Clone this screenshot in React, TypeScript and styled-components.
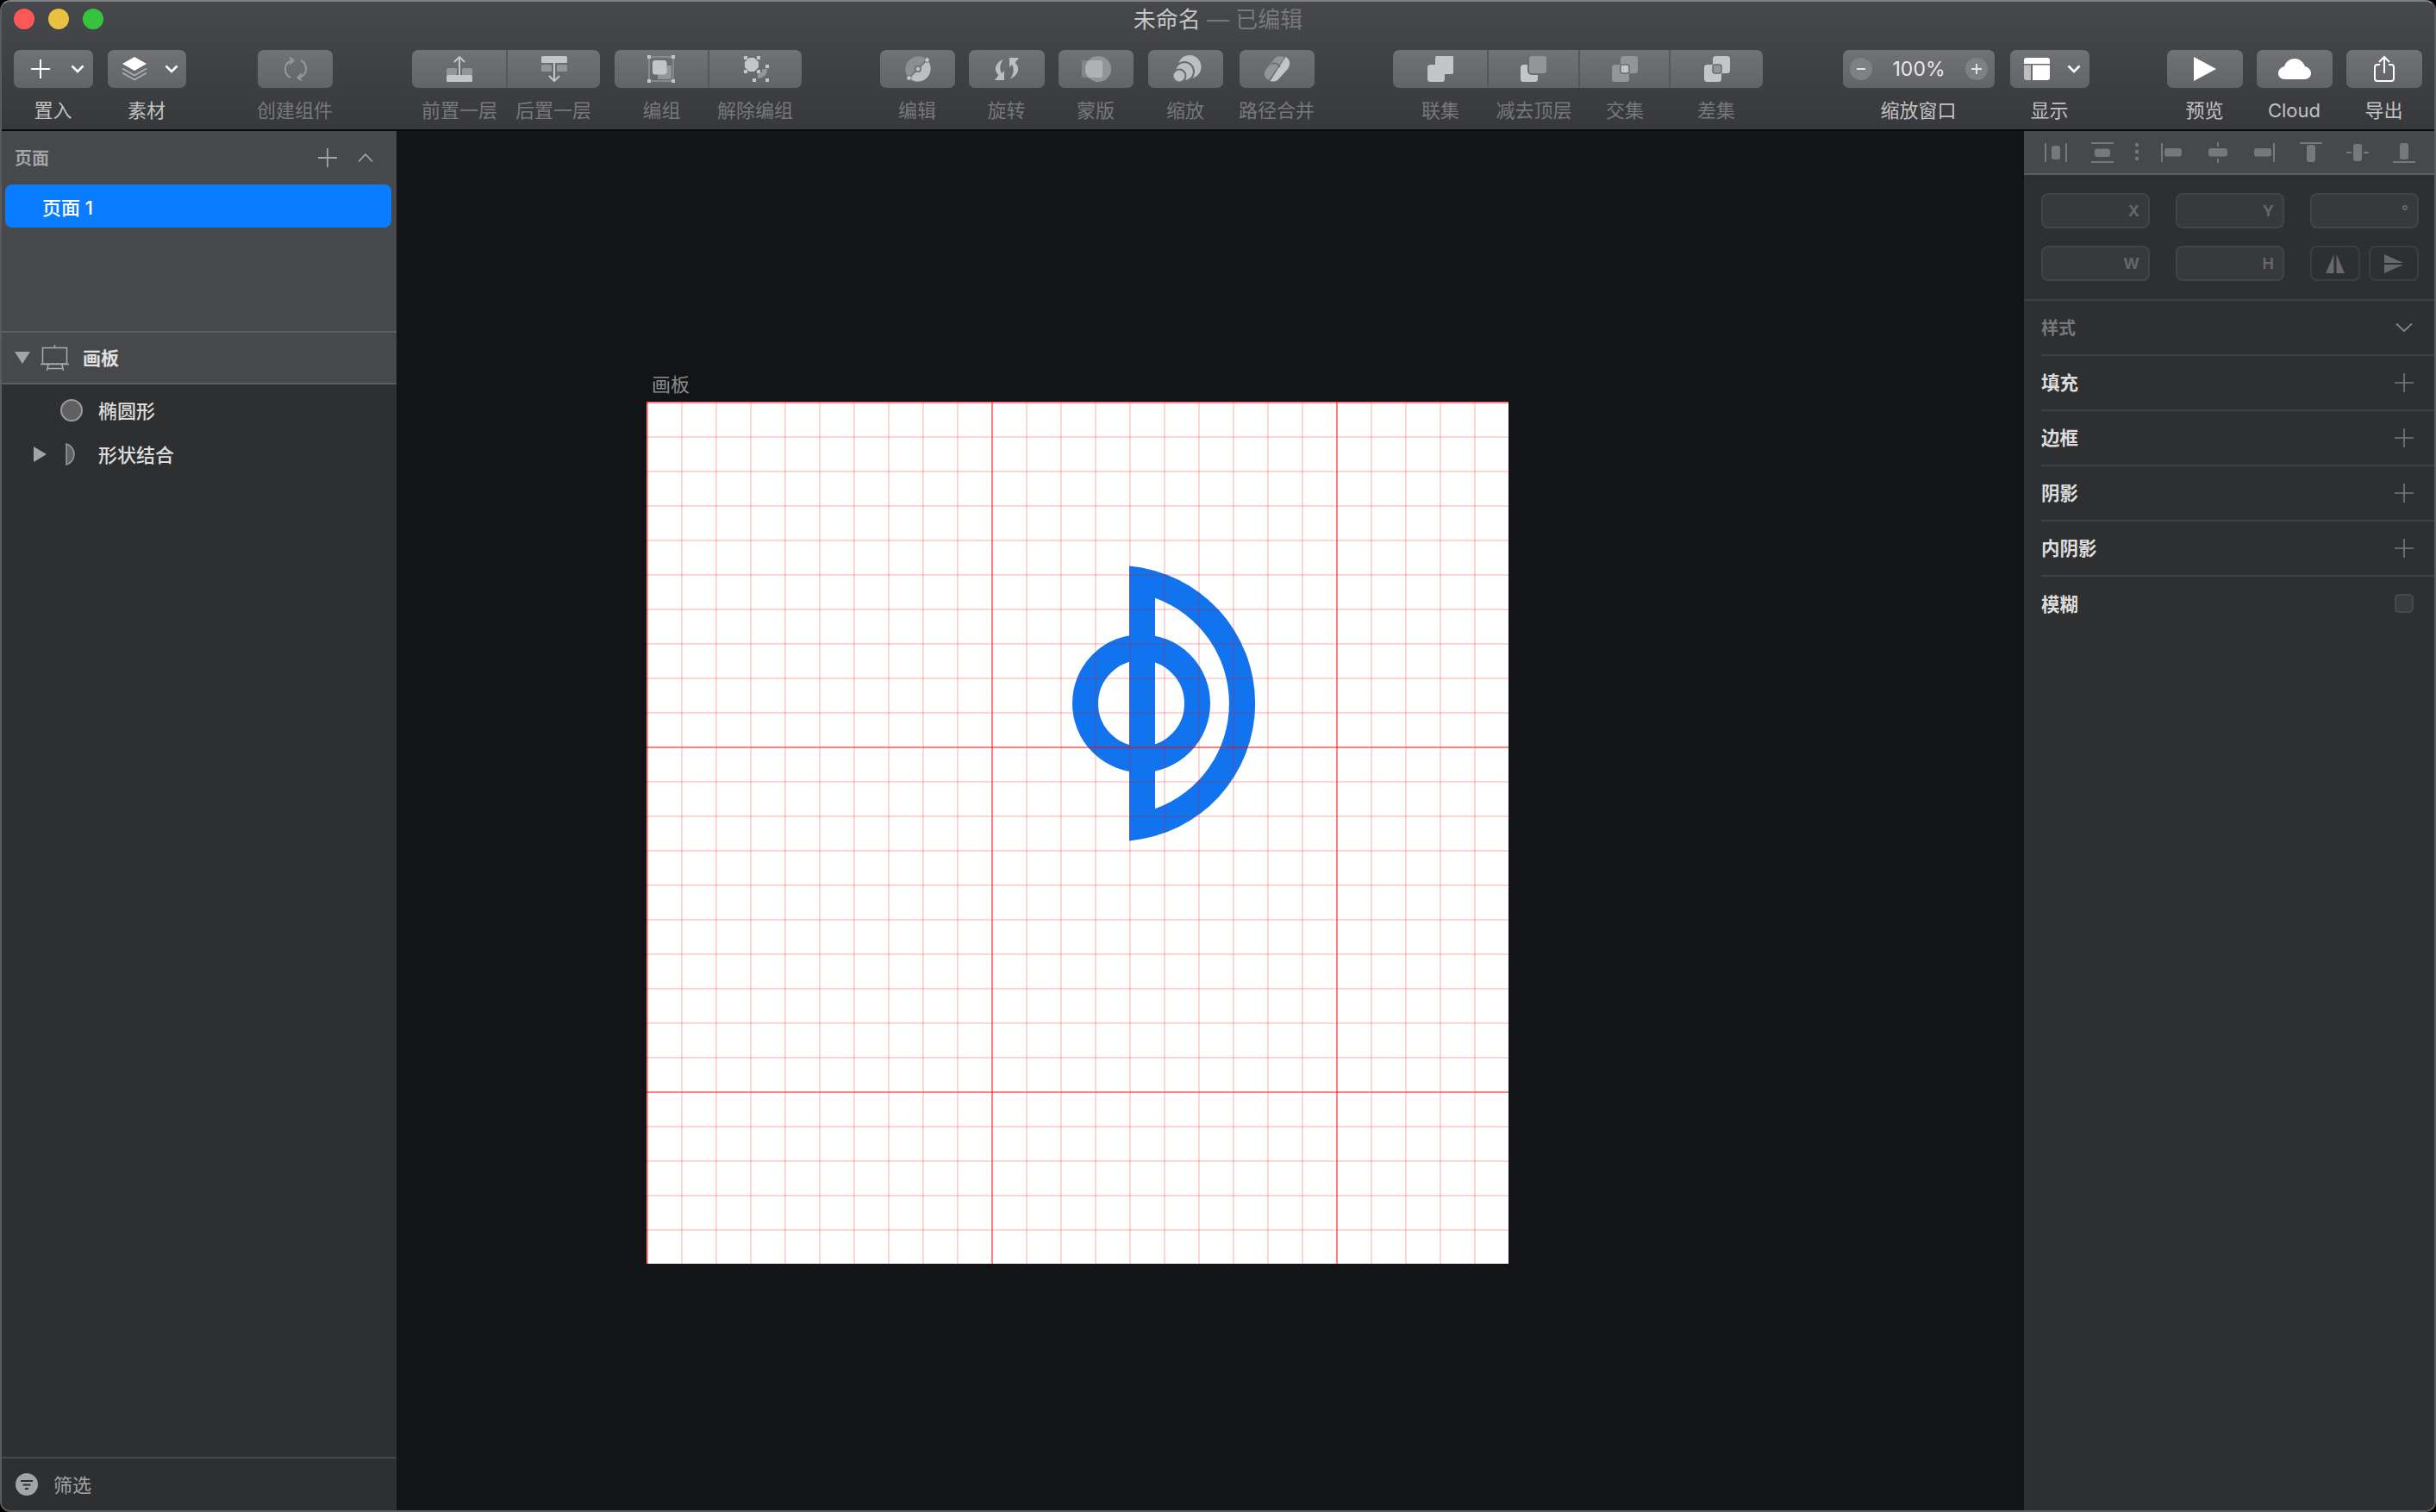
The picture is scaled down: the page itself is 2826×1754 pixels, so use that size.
import React from "react";
import styled, { createGlobalStyle } from "styled-components";

const LIGHT = "#c4c5c7";
const DARK = "#949597";
const FACE = "#6a6b6e";

const GlobalStyle = createGlobalStyle`
  html, body {
    margin: 0;
    padding: 0;
    background: #000;
  }
  * {
    box-sizing: border-box;
  }
  svg {
    display: block;
    flex: none;
  }
`;

const Chevron = () => (
  <svg width="16" height="12" viewBox="0 0 16 12">
    <path d="M1.5 2.5 8 9l6.5-6.5" fill="none" stroke="#fff" strokeWidth="2.6" />
  </svg>
);

const PlusIcon = () => (
  <svg width="30" height="24" viewBox="0 0 30 24">
    <path d="M4 12h22M15 1v22" stroke="#fff" strokeWidth="2" />
  </svg>
);

const LayersIcon = () => (
  <svg width="30" height="28" viewBox="0 0 30 28">
    <path d="M15 0 29 8 15 16 1 8z" fill="#fff" />
    <path d="M1 13.5 15 21.5 29 13.5M1 18.5 15 26.5 29 18.5" fill="none" stroke="#aeafb1" strokeWidth="1.6" />
  </svg>
);

const SyncIcon = () => (
  <svg width="30" height="30" viewBox="0 0 30 30" fill="none" stroke="#97989a" strokeWidth="2">
    <path d="M12 5C6 6 3 10 3 15c0 4 2 8 6 10" />
    <path d="M8 1.5 12.5 5 8 9.5" />
    <path d="M18 25c6-1 9-5 9-10 0-4-2-8-6-10" />
    <path d="M22 28.5 17.5 25 22 20.5" />
  </svg>
);

const ForwardIcon = () => (
  <svg width="30" height="30" viewBox="0 0 30 30">
    <rect x="0" y="14" width="12" height="8" rx="1.5" fill={DARK} />
    <rect x="18" y="14" width="12" height="8" rx="1.5" fill={DARK} />
    <rect x="0" y="22" width="30" height="8" rx="1.5" fill={LIGHT} />
    <path d="M15 1v22M9 7l6-6 6 6" fill="none" stroke={LIGHT} strokeWidth="2" />
  </svg>
);

const BackwardIcon = () => (
  <svg width="30" height="30" viewBox="0 0 30 30">
    <rect x="0" y="10" width="12" height="8" rx="1.5" fill={DARK} />
    <rect x="18" y="10" width="12" height="8" rx="1.5" fill={DARK} />
    <rect x="0" y="0" width="30" height="8" rx="1.5" fill={LIGHT} />
    <path d="M15 7v22M9 23l6 6 6-6" fill="none" stroke={LIGHT} strokeWidth="2" />
  </svg>
);

const GroupIcon = () => (
  <svg width="32" height="32" viewBox="0 0 32 32">
    <rect x="2" y="2" width="28" height="28" fill="none" stroke="#929395" strokeWidth="1.5" />
    <path d="M28 12v14a2 2 0 0 1-2 2H12v-6h10V12z" fill={DARK} />
    <rect x="6" y="6" width="16.5" height="16.5" rx="3" fill={LIGHT} />
    {[0, 28].map((x) =>
      [0, 28].map((y) => <rect key={`${x}-${y}`} x={x} y={y} width="4" height="4" fill={LIGHT} />)
    )}
  </svg>
);

const UngroupIcon = () => (
  <svg width="32" height="32" viewBox="0 0 32 32">
    <path d="M7 3h6l5 5v6l-5 5H7l-5-5V8z" transform="translate(1 0)" fill={LIGHT} />
    <path d="M24 14a7 7 0 0 1-8 8" fill="none" stroke={DARK} strokeWidth="5.5" transform="translate(2 2)" />
    {[
      [2, 1],
      [17, 1],
      [2, 17],
      [17, 17],
      [27, 11],
      [12, 27],
      [27, 27],
    ].map(([x, y]) => (
      <rect key={`${x}-${y}`} x={x} y={y} width="4" height="4" fill={LIGHT} />
    ))}
  </svg>
);

const EditIcon = () => (
  <svg width="36" height="36" viewBox="0 0 36 36">
    <path d="M28.6 7.4A15 15 0 0 0 7.4 28.6z" fill="#8d8e90" />
    <path d="M28.6 7.4A15 15 0 0 1 7.4 28.6z" fill="#bdbec0" />
    <path d="M8 28 28 8" stroke={FACE} strokeWidth="1.5" />
    <circle cx="7.5" cy="28.5" r="2.8" fill="#c9cacc" stroke={FACE} strokeWidth="1" />
    <circle cx="28.5" cy="7.5" r="2.8" fill="#c9cacc" stroke={FACE} strokeWidth="1" />
    <circle cx="18" cy="18" r="3.2" fill="#bdbec0" stroke={FACE} strokeWidth="1.5" />
  </svg>
);

const RotateIcon = () => {
  const arm = "M11 3.7C3 7-2 16 5.5 22L1 28h11V17l-3 3C6 15 7 9 11 3.7z";
  return (
    <svg width="30" height="30" viewBox="0 0 30 30" fill="#bdbec0">
      <path d={arm} />
      <path d={arm} transform="rotate(180 15 15)" />
    </svg>
  );
};

const MaskIcon = () => (
  <svg width="36" height="36" viewBox="0 0 36 36">
    <defs>
      <clipPath id="mask-circle">
        <circle cx="20" cy="18" r="15" />
      </clipPath>
    </defs>
    <rect x="1" y="8" width="24" height="20" rx="2" fill="#858688" />
    <circle cx="20" cy="18" r="15" fill="#939496" />
    <rect x="1" y="8" width="24" height="20" rx="2" fill="#b0b1b3" clipPath="url(#mask-circle)" />
  </svg>
);

const ScaleIcon = () => (
  <svg width="36" height="36" viewBox="0 0 36 36" fill="#bdbec0">
    <circle cx="22" cy="15.5" r="13.5" />
    <circle cx="16" cy="21" r="11" stroke={FACE} strokeWidth="2" />
    <circle cx="10" cy="26" r="7.5" stroke={FACE} strokeWidth="2" />
  </svg>
);

const MergeIcon = () => (
  <svg width="36" height="36" viewBox="0 0 36 36">
    <path d="M26 5C22 2 16 3 13 8L5 18C1 23 3 29 8 31z" fill="#939496" />
    <path d="M27.5 4C32 6 34 12 30 18L19 30C16 33 12 33 9.5 32z" fill="#c4c5c7" />
    <path d="M11 12C16 10 20 13 21 16" fill="none" stroke={FACE} strokeWidth="1.5" />
  </svg>
);

type BoolColors = { top: string; bottom: string; overlap?: string };

const BoolIcon = ({ top, bottom, overlap }: BoolColors) => (
  <svg width="30" height="30" viewBox="0 0 30 30">
    <rect x="0" y="10" width="20" height="20" rx="3.5" fill={bottom} />
    {overlap ? (
      <rect x="10" y="0" width="20" height="20" rx="3.5" fill={top} />
    ) : (
      <rect x="9" y="-1" width="22" height="22" rx="4" fill={top} stroke={FACE} strokeWidth={top === LIGHT ? 0 : 2} />
    )}
    {overlap && <rect x="10" y="10" width="10" height="10" rx="2.5" fill={overlap} stroke={FACE} strokeWidth="1.5" />}
  </svg>
);

const LayoutIcon = () => (
  <svg width="30" height="26" viewBox="0 0 30 26">
    <path d="M3 0h24a3 3 0 0 1 3 3v4H0V3a3 3 0 0 1 3-3z" fill="#fff" />
    <path d="M0 8.5h8V26H3a3 3 0 0 1-3-3z" fill="#bcbdbf" />
    <path d="M10 8.5h20V23a3 3 0 0 1-3 3H10z" fill="#fff" />
  </svg>
);

const PlayIcon = () => (
  <svg width="26" height="28" viewBox="0 0 26 28">
    <path d="M0 0 26 14 0 28z" fill="#fff" />
  </svg>
);

const CloudIcon = () => (
  <svg width="38" height="24" viewBox="0 0 38 24">
    <path
      d="M8 24C3 24 0 21 0 17c0-4 3-7 7-8C9 3 14 0 19 0c6 0 10 4 12 9 4 1 7 4 7 8 0 4-3 7-8 7z"
      fill="#fff"
    />
  </svg>
);

const ShareIcon = () => (
  <svg width="24" height="32" viewBox="0 0 24 32" fill="none" stroke="#fff" strokeWidth="2">
    <path d="M7 11H4a3 3 0 0 0-3 3v13a3 3 0 0 0 3 3h16a3 3 0 0 0 3-3V14a3 3 0 0 0-3-3h-3" />
    <path d="M12 21V2M6 8l6-6 6 6" />
  </svg>
);

const ZoomGlyph = ({ plus }: { plus?: boolean }) => (
  <svg width="26" height="26" viewBox="0 0 26 26">
    <circle cx="13" cy="13" r="13" fill="#7f8083" />
    <path d={plus ? "M7 13h12M13 7v12" : "M8 13h10"} stroke="#e4e4e5" strokeWidth="2" />
  </svg>
);

type Tool = {
  label: string;
  w: number;
  gap: number;
  seg?: "first" | "mid" | "last";
  off?: boolean;
  drop?: boolean;
  icon: React.ReactNode;
};

const tools: Tool[] = [
  { label: "置入", w: 92, gap: 0, drop: true, icon: <PlusIcon /> },
  { label: "素材", w: 91, gap: 17, drop: true, icon: <LayersIcon /> },
  { label: "创建组件", w: 87, gap: 83, off: true, icon: <SyncIcon /> },
  { label: "前置一层", w: 111, gap: 92, off: true, seg: "first", icon: <ForwardIcon /> },
  { label: "后置一层", w: 107, gap: 0, off: true, seg: "last", icon: <BackwardIcon /> },
  { label: "编组", w: 110, gap: 17, off: true, seg: "first", icon: <GroupIcon /> },
  { label: "解除编组", w: 107, gap: 0, off: true, seg: "last", icon: <UngroupIcon /> },
  { label: "编辑", w: 87, gap: 91, off: true, icon: <EditIcon /> },
  { label: "旋转", w: 88, gap: 16, off: true, icon: <RotateIcon /> },
  { label: "蒙版", w: 87, gap: 16, off: true, icon: <MaskIcon /> },
  { label: "缩放", w: 87, gap: 17, off: true, icon: <ScaleIcon /> },
  { label: "路径合并", w: 87, gap: 19, off: true, icon: <MergeIcon /> },
  { label: "联集", w: 111, gap: 91, off: true, seg: "first", icon: <BoolIcon top={LIGHT} bottom={LIGHT} /> },
  { label: "减去顶层", w: 106, gap: 0, off: true, seg: "mid", icon: <BoolIcon top={DARK} bottom={LIGHT} /> },
  { label: "交集", w: 105, gap: 0, off: true, seg: "mid", icon: <BoolIcon top={DARK} bottom={DARK} overlap={LIGHT} /> },
  { label: "差集", w: 107, gap: 0, off: true, seg: "last", icon: <BoolIcon top={LIGHT} bottom={LIGHT} overlap={DARK} /> },
];

const alignIcons: { gap: number; draw: React.ReactNode }[] = [
  { gap: 0, draw: <><path d="M1 1v22M25 1v22" /><rect className="solid" x="8" y="4" width="10" height="16" rx="3" /></> },
  { gap: 28, draw: <><path d="M0 1h26M0 23h26" /><rect className="solid" x="4" y="7.5" width="18" height="9.5" rx="3" /></> },
  { gap: 53, draw: <><path d="M3 1v22" /><rect className="solid" x="6" y="7" width="20" height="9.5" rx="3" /></> },
  { gap: 29, draw: <><path d="M13 0v5M13 19v5" /><rect className="solid" x="2" y="7" width="22" height="9.5" rx="3" /></> },
  { gap: 29, draw: <><path d="M23 1v22" /><rect className="solid" x="0" y="7" width="20" height="9.5" rx="3" /></> },
  { gap: 27, draw: <><path d="M0 1h26" /><rect className="solid" x="8" y="3" width="10" height="20" rx="3" /></> },
  { gap: 28, draw: <><path d="M0 12h6M20 12h6" /><rect className="solid" x="8" y="2" width="10" height="20" rx="3" /></> },
  { gap: 28, draw: <><path d="M0 23h26" /><rect className="solid" x="8" y="1" width="10" height="19" rx="3" /></> },
];

const styleRows = ["填充", "边框", "阴影", "内阴影"];

export default function App() {
  return (
    <>
      <GlobalStyle />
      <Window>
        <Header>
          <TitleBar>
            <Lights>
              <Light $color="#fc5858" />
              <Light $color="#e9c03f" />
              <Light $color="#36c43f" />
            </Lights>
            <Title>
              未命名<TitleState> — 已编辑</TitleState>
            </Title>
          </TitleBar>
          <Toolbar>
            {tools.map((t) => (
              <ToolColumn key={t.label} $w={t.w} $gap={t.gap}>
                <Face $seg={t.seg} $drop={t.drop}>
                  {t.icon}
                  {t.drop && <Chevron />}
                </Face>
                <ToolLabel $off={t.off}>{t.label}</ToolLabel>
              </ToolColumn>
            ))}
            <ToolColumn $w={176} $gap={93}>
              <ZoomFace>
                <ZoomGlyph />
                <ZoomValue>100%</ZoomValue>
                <ZoomGlyph plus />
              </ZoomFace>
              <ToolLabel>缩放窗口</ToolLabel>
            </ToolColumn>
            <ToolColumn $w={92} $gap={18}>
              <Face $drop>
                <LayoutIcon />
                <Chevron />
              </Face>
              <ToolLabel>显示</ToolLabel>
            </ToolColumn>
            <ToolColumn $w={88} $gap={90}>
              <Face>
                <PlayIcon />
              </Face>
              <ToolLabel>预览</ToolLabel>
            </ToolColumn>
            <ToolColumn $w={88} $gap={16}>
              <Face>
                <CloudIcon />
              </Face>
              <ToolLabel>Cloud</ToolLabel>
            </ToolColumn>
            <ToolColumn $w={88} $gap={16}>
              <Face>
                <ShareIcon />
              </Face>
              <ToolLabel>导出</ToolLabel>
            </ToolColumn>
          </Toolbar>
        </Header>

        <Body>
          <LeftPanel>
            <PagesSection>
              <PagesHeader>
                <PagesTitle>页面</PagesTitle>
                <PagesActions>
                  <svg width="22" height="22" viewBox="0 0 22 22">
                    <path d="M0 11h22M11 0v22" stroke="#a3a4a5" strokeWidth="1.8" />
                  </svg>
                  <svg width="18" height="12" viewBox="0 0 18 12">
                    <path d="M1 10.5 9 2l8 8.5" fill="none" stroke="#a3a4a5" strokeWidth="1.8" />
                  </svg>
                </PagesActions>
              </PagesHeader>
              <PageRow>页面 1</PageRow>
            </PagesSection>
            <GroupRow>
              <svg width="18" height="14" viewBox="0 0 18 14">
                <path d="M0 0h18L9 14z" fill="#a3a4a5" />
              </svg>
              <svg width="34" height="30" viewBox="0 0 34 30" fill="none" stroke="#a9aaab" strokeWidth="1.5">
                <path d="M2.5 3.5h28V22h-28zM0 22.5h33M16.5 0v3.5M9 23 7.5 30M25 23l1.5 7M8 27.5h18" />
              </svg>
              <GroupName>画板</GroupName>
            </GroupRow>
            <LayerList>
              <LayerRow>
                <span />
                <svg width="26" height="26" viewBox="0 0 26 26">
                  <circle cx="13" cy="13" r="12" fill="#5f6062" stroke="#9b9b9c" strokeWidth="2" />
                </svg>
                <LayerName>椭圆形</LayerName>
              </LayerRow>
              <LayerRow>
                <svg width="15" height="18" viewBox="0 0 15 18">
                  <path d="M0 0 15 9 0 18z" fill="#a3a4a5" />
                </svg>
                <ShapeGlyph width="14" height="26" viewBox="0 0 14 26">
                  <path d="M1 1a12.5 12.5 0 0 1 0 24z" fill="#5f6062" stroke="#9b9b9c" strokeWidth="1.5" />
                </ShapeGlyph>
                <LayerName>形状结合</LayerName>
              </LayerRow>
            </LayerList>
            <FilterBar>
              <svg width="26" height="26" viewBox="0 0 26 26">
                <circle cx="13" cy="13" r="13" fill="#a3a4a5" />
                <path d="M6 9h14M8.5 13.5h9M11 18h4" stroke="#2e2f31" strokeWidth="2" />
              </svg>
              <FilterText>筛选</FilterText>
            </FilterBar>
          </LeftPanel>

          <Canvas>
            <ArtboardLabel>画板</ArtboardLabel>
            <Artboard>
              <svg width="1000" height="1000" viewBox="0 0 1000 1000">
                <path
                  fillRule="evenodd"
                  d="M560 190.6A160 160 0 0 1 560 509.4ZM590 227.7A130 130 0 0 1 590 472.3Z"
                  fill="#1273ee"
                />
                <circle cx="574" cy="350" r="65" fill="none" stroke="#1273ee" strokeWidth="30" />
              </svg>
            </Artboard>
          </Canvas>

          <RightPanel>
            <AlignBar>
              {alignIcons.map((a, i) => (
                <AlignGlyph key={i} $gap={a.gap} width="26" height="24" viewBox="0 0 26 24">
                  {a.draw}
                </AlignGlyph>
              ))}
              <AlignDots width="6" height="22" viewBox="0 0 6 22">
                <circle cx="3" cy="3" r="2.2" />
                <circle cx="3" cy="11" r="2.2" />
                <circle cx="3" cy="19" r="2.2" />
              </AlignDots>
            </AlignBar>
            <Geometry>
              <FieldRow>
                <Field>X</Field>
                <Field>Y</Field>
                <Field>°</Field>
              </FieldRow>
              <FieldRow>
                <Field>W</Field>
                <Field>H</Field>
                <FlipGroup>
                  <FlipButton>
                    <svg width="24" height="22" viewBox="0 0 24 22" fill="#66676a">
                      <path d="M10.5 0v22H1zM13.5 0v22H23z" />
                    </svg>
                  </FlipButton>
                  <FlipButton>
                    <svg width="24" height="22" viewBox="0 0 24 22" fill="#66676a">
                      <path d="M1 0l22 10H1zM1 12h22L1 22z" />
                    </svg>
                  </FlipButton>
                </FlipGroup>
              </FieldRow>
            </Geometry>
            <StyleRow>
              <StyleTitle>样式</StyleTitle>
              <svg width="22" height="12" viewBox="0 0 22 12">
                <path d="M2 1.5 11 10l9-8.5" fill="none" stroke="#848587" strokeWidth="1.8" />
              </svg>
            </StyleRow>
            {styleRows.map((name) => (
              <StyleRow key={name}>
                <StyleName>{name}</StyleName>
                <svg width="22" height="22" viewBox="0 0 22 22">
                  <path d="M0 11h22M11 0v22" stroke="#77787a" strokeWidth="1.6" />
                </svg>
              </StyleRow>
            ))}
            <StyleRow $last>
              <StyleName>模糊</StyleName>
              <Checkbox />
            </StyleRow>
          </RightPanel>
        </Body>
      </Window>
    </>
  );
}

const Window = styled.div`
  width: 2826px;
  height: 1754px;
  display: flex;
  flex-direction: column;
  overflow: hidden;
  border-radius: 12px;
  border: 2px solid #5a5b5d;
  border-top-color: #7f8082;
  font-family: "Inter", "Noto Sans CJK SC", sans-serif;
  background: #2e2f31;
`;

const Header = styled.header`
  height: 150px;
  flex: none;
  border-bottom: 2px solid #0b0b0c;
  background: linear-gradient(#47484b, #38393c);
`;

const TitleBar = styled.div`
  height: 40px;
  display: grid;
  grid-template-columns: 1fr auto 1fr;
  align-items: center;
`;

const Lights = styled.div`
  display: flex;
  gap: 16px;
  padding-left: 14px;
`;

const Light = styled.span<{ $color: string }>`
  width: 24px;
  height: 24px;
  border-radius: 50%;
  background: ${(p) => p.$color};
`;

const Title = styled.div`
  padding-top: 2px;
  font-size: 26px;
  color: #c6c6c7;
  line-height: 38px;
`;

const TitleState = styled.span`
  color: #77787a;
`;

const Toolbar = styled.div`
  display: flex;
  padding: 16px 0 0 14px;
`;

const ToolColumn = styled.div<{ $w: number; $gap: number }>`
  width: ${(p) => p.$w}px;
  margin-left: ${(p) => p.$gap}px;
  flex: none;
  display: flex;
  flex-direction: column;
  align-items: stretch;
`;

const faceRadius = { first: "7px 0 0 7px", mid: "0", last: "0 7px 7px 0" };

const Face = styled.div<{ $seg?: "first" | "mid" | "last"; $drop?: boolean }>`
  height: 44px;
  display: flex;
  align-items: center;
  justify-content: ${(p) => (p.$drop ? "flex-start" : "center")};
  gap: 20px;
  padding-left: ${(p) => (p.$drop ? "16px" : "0")};
  border-radius: ${(p) => (p.$seg ? faceRadius[p.$seg] : "7px")};
  border-right: ${(p) => (p.$seg && p.$seg !== "last" ? "2px solid #56575a" : "0")};
  background: linear-gradient(#717275, #636467);
`;

const ZoomFace = styled(Face)`
  justify-content: space-between;
  padding: 0 8px;
  gap: 0;
`;

const ZoomValue = styled.span`
  font-size: 23px;
  color: #e8e8e9;
`;

const ToolLabel = styled.div<{ $off?: boolean }>`
  margin-top: 11px;
  margin-left: -1px;
  line-height: 30px;
  font-size: 22px;
  text-align: center;
  white-space: nowrap;
  color: ${(p) => (p.$off ? "#77787a" : "#c2c2c3")};
`;

const Body = styled.div`
  flex: 1;
  min-height: 0;
  display: flex;
`;

const LeftPanel = styled.aside`
  width: 458px;
  flex: none;
  display: flex;
  flex-direction: column;
  background: #2e2f31;
`;

const PagesSection = styled.section`
  height: 234px;
  flex: none;
  border-bottom: 2px solid #5b5c5e;
  background: #47484b;
`;

const PagesHeader = styled.div`
  height: 62px;
  display: flex;
  align-items: center;
  justify-content: space-between;
  padding: 0 27px 0 15px;
`;

const PagesTitle = styled.div`
  padding-bottom: 2px;
  font-size: 20px;
  font-weight: 700;
  color: #a3a4a5;
`;

const PagesActions = styled.div`
  display: flex;
  align-items: center;
  gap: 24px;
`;

const PageRow = styled.div`
  height: 50px;
  margin: 0 6px 0 4px;
  padding: 0 0 1px 43px;
  display: flex;
  align-items: center;
  border-radius: 8px;
  background: #0a7cff;
  color: #fff;
  font-size: 22px;
  font-weight: 500;
`;

const GroupRow = styled.div`
  height: 60px;
  flex: none;
  display: flex;
  align-items: center;
  padding-left: 15px;
  border-bottom: 2px solid #5b5c5e;
  background: #47484b;
  svg:first-child {
    margin-right: 12px;
  }
`;

const GroupName = styled.span`
  margin-left: 15px;
  padding-bottom: 2px;
  font-size: 21px;
  font-weight: 700;
  color: #e0e0e0;
`;

const LayerList = styled.div`
  flex: 1;
  padding-top: 4px;
`;

const LayerRow = styled.div`
  height: 51px;
  display: grid;
  grid-template-columns: 68px 44px 1fr;
  align-items: center;
  svg:first-child {
    margin-left: 37px;
  }
`;

const ShapeGlyph = styled.svg`
  margin-left: 6px;
`;

const LayerName = styled.span`
  padding-bottom: 1px;
  font-size: 22px;
  font-weight: 500;
  color: #dcdcdc;
`;

const FilterBar = styled.div`
  height: 62px;
  flex: none;
  display: flex;
  align-items: center;
  gap: 18px;
  padding-left: 16px;
  border-top: 2px solid #47484a;
`;

const FilterText = styled.span`
  padding-bottom: 2px;
  font-size: 22px;
  color: #a3a4a5;
`;

const Canvas = styled.main`
  flex: 1;
  min-width: 0;
  padding: 279px 0 0 290px;
  background: #131417;
`;

const ArtboardLabel = styled.div`
  height: 30px;
  margin-bottom: 5px;
  padding-left: 6px;
  line-height: 30px;
  font-size: 22px;
  color: #8b8b8c;
`;

const Artboard = styled.div`
  position: relative;
  width: 1000px;
  height: 1000px;
  background: #fff;

  &::after {
    content: "";
    position: absolute;
    inset: 0;
    background-image:
      linear-gradient(to right, rgba(255, 0, 0, 0.4) 2px, transparent 2px),
      linear-gradient(to bottom, rgba(255, 0, 0, 0.4) 2px, transparent 2px),
      linear-gradient(to right, rgba(255, 0, 0, 0.16) 2px, transparent 2px),
      linear-gradient(to bottom, rgba(255, 0, 0, 0.16) 2px, transparent 2px);
    background-size: 400px 400px, 400px 400px, 40px 40px, 40px 40px;
  }
`;

const RightPanel = styled.aside`
  width: 476px;
  flex: none;
  display: flex;
  flex-direction: column;
  background: #2e2f31;
`;

const AlignBar = styled.div`
  position: relative;
  height: 51px;
  flex: none;
  display: flex;
  align-items: center;
  padding-left: 24px;
  border-bottom: 2px solid #5d5e60;
  background: #47484b;
`;

const AlignGlyph = styled.svg<{ $gap: number }>`
  margin-left: ${(p) => p.$gap}px;
  fill: none;
  stroke: #77787a;
  stroke-width: 2;
  .solid {
    fill: #77787a;
    stroke: none;
  }
`;

const AlignDots = styled.svg`
  position: absolute;
  left: 128px;
  top: 13px;
  fill: #77787a;
`;

const Geometry = styled.section`
  height: 146px;
  flex: none;
  display: flex;
  flex-direction: column;
  gap: 20px;
  padding: 21px 0 0 20px;
  border-bottom: 2px solid #3f4042;
`;

const FieldRow = styled.div`
  display: flex;
  gap: 30px;
`;

const Field = styled.div`
  width: 126px;
  height: 41px;
  display: flex;
  align-items: center;
  justify-content: flex-end;
  padding-right: 10px;
  border: 2px solid #434446;
  border-radius: 8px;
  background: #38393b;
  font-size: 18px;
  font-weight: 700;
  color: #656668;
`;

const FlipGroup = styled.div`
  width: 126px;
  display: flex;
  justify-content: space-between;
`;

const FlipButton = styled.div`
  width: 58px;
  height: 41px;
  display: flex;
  align-items: center;
  justify-content: center;
  border: 2px solid #3d3e40;
  border-radius: 8px;
`;

const StyleRow = styled.div<{ $last?: boolean }>`
  height: 64px;
  flex: none;
  margin-left: 20px;
  padding-right: 24px;
  display: flex;
  align-items: center;
  justify-content: space-between;
  border-bottom: ${(p) => (p.$last ? "0" : "2px solid #3f4042")};
`;

const StyleTitle = styled.span`
  padding-bottom: 2px;
  font-size: 20px;
  font-weight: 700;
  color: #77787a;
`;

const StyleName = styled.span`
  padding-bottom: 3px;
  font-size: 21.5px;
  font-weight: 700;
  color: #dcdcdc;
`;

const Checkbox = styled.span`
  width: 22px;
  height: 22px;
  margin-bottom: 2px;
  border: 2px solid #48494b;
  border-radius: 5px;
  background: #3a3b3d;
`;
